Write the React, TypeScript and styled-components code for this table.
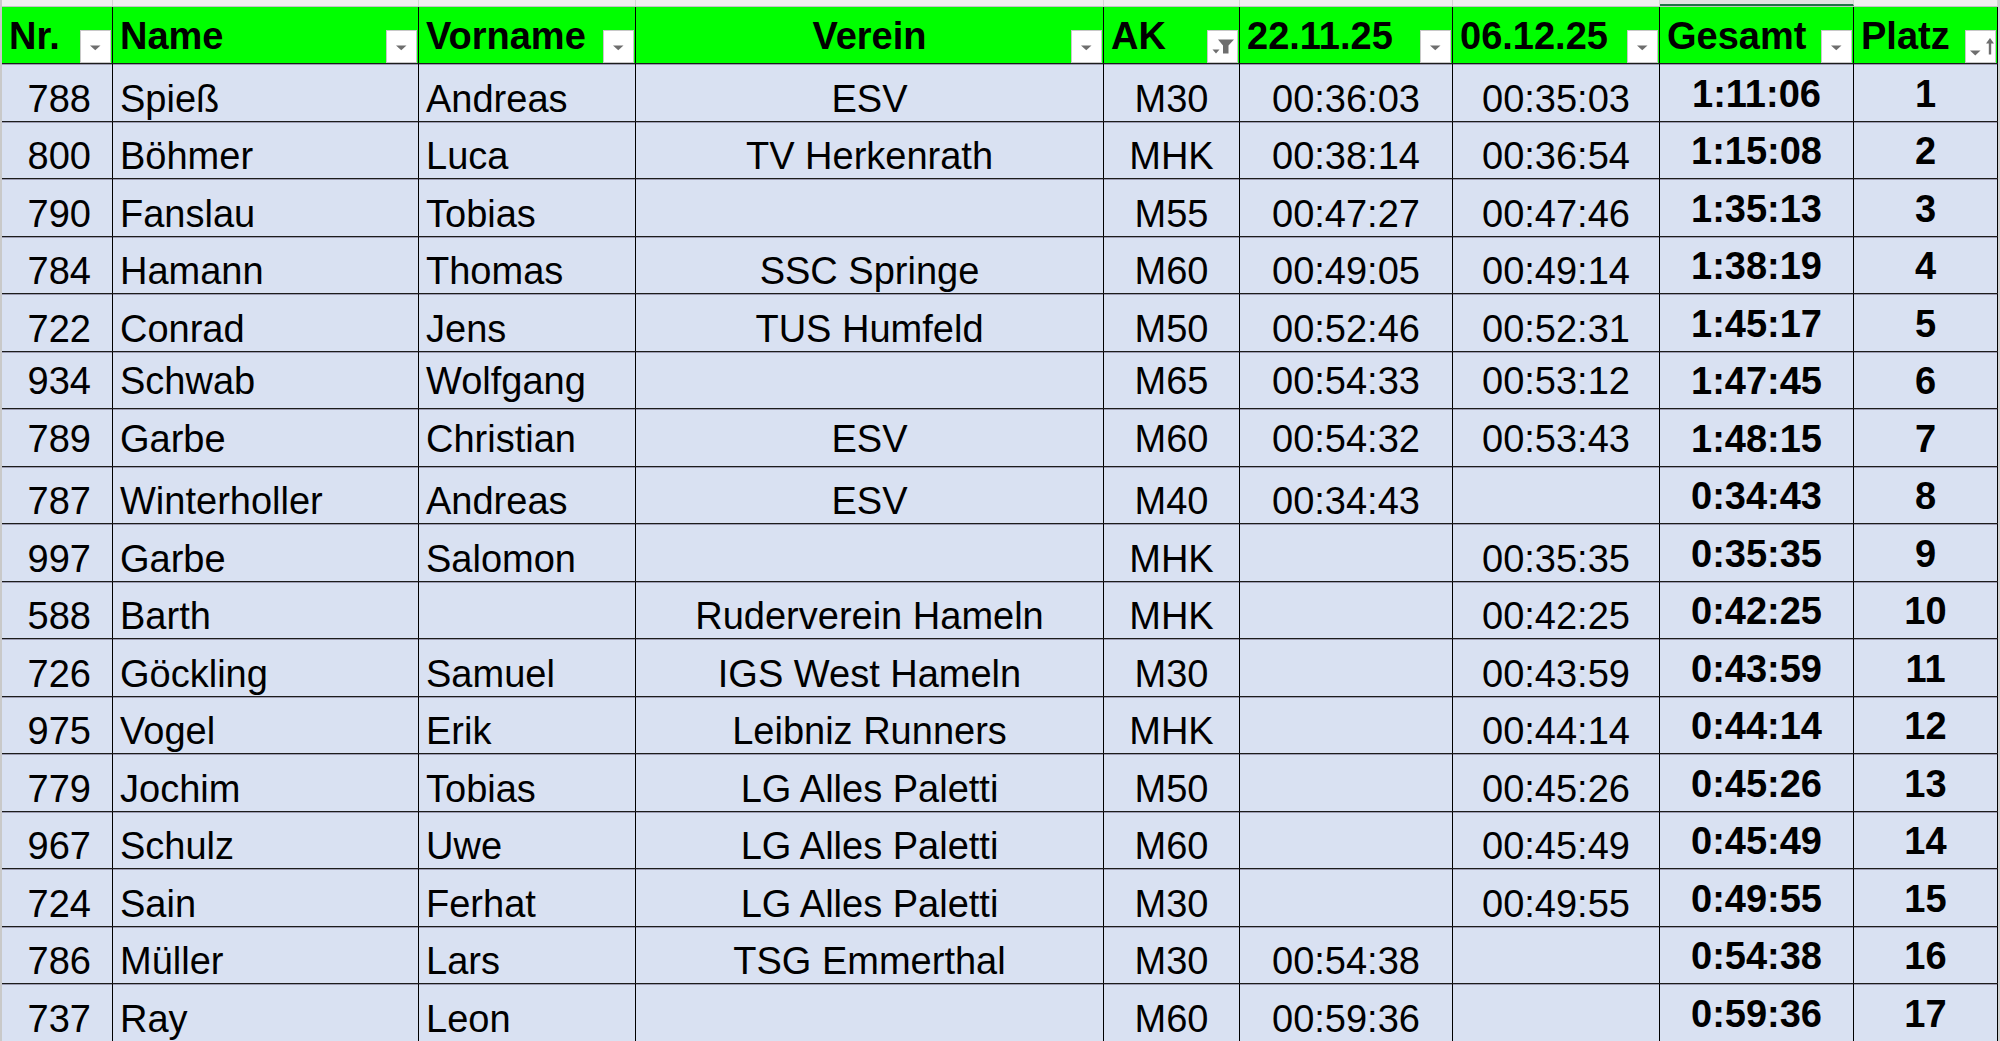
import React from "react";
import styled, { createGlobalStyle } from "styled-components";

const COLS = "111px 306px 217px 468px 136px 213px 207px 194px 144px";

const GlobalStyle = createGlobalStyle`
  html, body { margin: 0; padding: 0; background: #ffffff; }
  body { overflow: hidden; }
`;

const Sheet = styled.div`
  width: 2000px;
  height: 1041px;
  overflow: hidden;
  box-sizing: border-box;
  border-left: 2px solid #c9c9c9;
  border-right: 2px solid #d0d0d0;
  background: #f3f3f3;
  font-family: "Liberation Sans", Arial, Helvetica, sans-serif;
  color: #000;
`;

const ColumnStrip = styled.div`
  display: grid;
  grid-template-columns: ${COLS};
  height: 7px;
  box-sizing: border-box;
  background: #efefef;
  border-bottom: 1px solid #c4c4c4;
`;

const StripCell = styled.div<{ $selected?: boolean }>`
  border-right: 1px solid #d4d4d4;
  box-sizing: border-box;
  background: ${(p) => (p.$selected ? "#e1e1e1" : "transparent")};
  border-bottom: ${(p) => (p.$selected ? "2px solid #217346" : "none")};
`;

const HeaderRow = styled.div`
  display: grid;
  grid-template-columns: ${COLS};
  height: 56px;
  background: #00ff00;
`;

const HeaderCell = styled.div<{ $align: string }>`
  position: relative;
  display: flex;
  align-items: center;
  justify-content: ${(p) => p.$align};
  padding: 2px 7px 0 7px;
  border-right: 1px solid #000;
  font-size: 38px;
  line-height: 38px;
  font-weight: 700;
  white-space: nowrap;
  overflow: hidden;
`;

const FilterButton = styled.span`
  position: absolute;
  right: 1px;
  bottom: 0;
  width: 31px;
  height: 33px;
  box-sizing: border-box;
  background: #ffffff;
  border: 1px solid #c8c8c8;
  display: block;
`;

const DataRow = styled.div`
  display: grid;
  grid-template-columns: ${COLS};
  height: 57.5px;
  box-sizing: border-box;
  background: #d9e1f2;
  border-top: 1px solid #1c1c1c;
  box-shadow: inset 0 1px 0 #9c9cb2;
`;

const Cell = styled.div<{ $align: string; $bold?: boolean; $lift: number; $padRight?: number }>`
  display: flex;
  align-items: flex-end;
  justify-content: ${(p) => p.$align};
  padding: 0 ${(p) => (p.$padRight ?? 7)}px ${(p) => p.$lift}px 7px;
  border-right: 1px solid #000;
  font-size: 38px;
  line-height: 38px;
  font-weight: ${(p) => (p.$bold ? 700 : 400)};
  white-space: nowrap;
  overflow: hidden;
`;

type Kind = "arrow" | "funnel" | "sort";

const FilterIcon: React.FC<{ kind: Kind }> = ({ kind }) => (
  <FilterButton>
    <svg width="29" height="31" viewBox="1 1 29 31">
      {kind === "arrow" && <polygon points="10,14.5 20.5,14.5 15.25,19.3" fill="#6e6e6e" />}
      {kind === "funnel" && (
        <>
          <polygon points="11,8.5 27,8.5 21.5,14.5 21.5,22.5 16,22.5 16,14.5" fill="#6e6e6e" />
          <polygon points="5.5,18.5 12.5,18.5 9,22.5" fill="#6e6e6e" />
        </>
      )}
      {kind === "sort" && (
        <>
          <polygon points="5,19.5 15.5,19.5 10.25,24.5" fill="#6e6e6e" />
          <line x1="25" y1="10" x2="25" y2="23.5" stroke="#6e6e6e" strokeWidth="2.4" />
          <polygon points="21,12.5 29,12.5 25,7" fill="#6e6e6e" />
        </>
      )}
    </svg>
  </FilterButton>
);

const headers: { label: string; align: string; icon: Kind }[] = [
  { label: "Nr.", align: "flex-start", icon: "arrow" },
  { label: "Name", align: "flex-start", icon: "arrow" },
  { label: "Vorname", align: "flex-start", icon: "arrow" },
  { label: "Verein", align: "center", icon: "arrow" },
  { label: "AK", align: "flex-start", icon: "funnel" },
  { label: "22.11.25", align: "flex-start", icon: "arrow" },
  { label: "06.12.25", align: "flex-start", icon: "arrow" },
  { label: "Gesamt", align: "flex-start", icon: "arrow" },
  { label: "Platz", align: "flex-start", icon: "sort" },
];

type Entry = [string, string, string, string, string, string, string, string, string];

const rows: Entry[] = [
  ["788", "Spieß", "Andreas", "ESV", "M30", "00:36:03", "00:35:03", "1:11:06", "1"],
  ["800", "Böhmer", "Luca", "TV Herkenrath", "MHK", "00:38:14", "00:36:54", "1:15:08", "2"],
  ["790", "Fanslau", "Tobias", "", "M55", "00:47:27", "00:47:46", "1:35:13", "3"],
  ["784", "Hamann", "Thomas", "SSC Springe", "M60", "00:49:05", "00:49:14", "1:38:19", "4"],
  ["722", "Conrad", "Jens", "TUS Humfeld", "M50", "00:52:46", "00:52:31", "1:45:17", "5"],
  ["934", "Schwab", "Wolfgang", "", "M65", "00:54:33", "00:53:12", "1:47:45", "6"],
  ["789", "Garbe", "Christian", "ESV", "M60", "00:54:32", "00:53:43", "1:48:15", "7"],
  ["787", "Winterholler", "Andreas", "ESV", "M40", "00:34:43", "", "0:34:43", "8"],
  ["997", "Garbe", "Salomon", "", "MHK", "", "00:35:35", "0:35:35", "9"],
  ["588", "Barth", "", "Ruderverein Hameln", "MHK", "", "00:42:25", "0:42:25", "10"],
  ["726", "Göckling", "Samuel", "IGS West Hameln", "M30", "", "00:43:59", "0:43:59", "11"],
  ["975", "Vogel", "Erik", "Leibniz Runners", "MHK", "", "00:44:14", "0:44:14", "12"],
  ["779", "Jochim", "Tobias", "LG Alles Paletti", "M50", "", "00:45:26", "0:45:26", "13"],
  ["967", "Schulz", "Uwe", "LG Alles Paletti", "M60", "", "00:45:49", "0:45:49", "14"],
  ["724", "Sain", "Ferhat", "LG Alles Paletti", "M30", "", "00:49:55", "0:49:55", "15"],
  ["786", "Müller", "Lars", "TSG Emmerthal", "M30", "00:54:38", "", "0:54:38", "16"],
  ["737", "Ray", "Leon", "", "M60", "00:59:36", "", "0:59:36", "17"],
];

const raisedRows = new Set(["934", "789"]);

const cellAlign = ["flex-end", "flex-start", "flex-start", "center", "center", "center", "center", "center", "center"];

export default function App() {
  return (
    <>
      <GlobalStyle />
      <Sheet>
        <ColumnStrip>
          {headers.map((h, i) => (
            <StripCell key={h.label} $selected={i === 7} />
          ))}
        </ColumnStrip>
        <HeaderRow>
          {headers.map((h) => (
            <HeaderCell key={h.label} $align={h.align}>
              {h.label}
              <FilterIcon kind={h.icon} />
            </HeaderCell>
          ))}
        </HeaderRow>
        {rows.map((r) => {
          const raised = raisedRows.has(r[0]);
          return (
            <DataRow key={r[0]}>
              {r.map((v, i) => {
                const bold = i >= 7;
                const lift = raised || bold ? 8 : 3;
                return (
                  <Cell
                    key={i}
                    $align={cellAlign[i]}
                    $bold={bold}
                    $lift={lift}
                    $padRight={i === 0 ? 21 : 7}
                  >
                    {v}
                  </Cell>
                );
              })}
            </DataRow>
          );
        })}
      </Sheet>
    </>
  );
}
